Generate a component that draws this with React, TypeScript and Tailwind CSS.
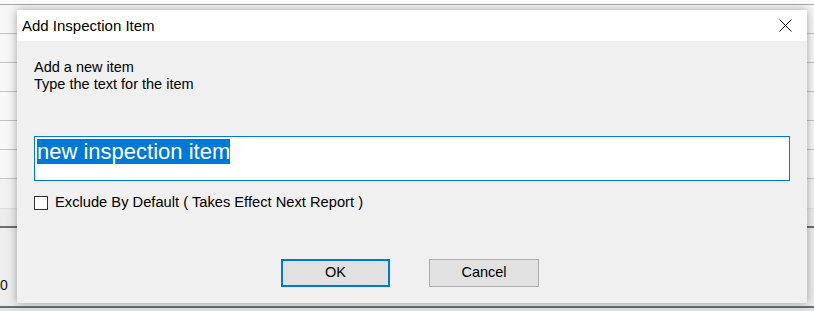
import React from "react";

const rows = [0, 1, 2, 3, 4, 5];

function Backdrop() {
  return (
    <div className="flex flex-col w-full h-full bg-[#f3f3f3]">
      <div className="h-[4px] bg-[#fbfbfb] border-b border-[#a9a9a9] box-content" />
      {rows.map((r) => (
        <div key={r} className="h-[28px] border-b border-[#c4c4c4] box-content bg-[#f7f7f7]" />
      ))}
      <div className="h-[29px] border-b border-[#e0e0e0] box-content bg-[#f2f2f2]" />
      <div className="h-[17px] border-b-2 border-[#6e6e6e] box-content bg-[#ececec]" />
      <div className="flex-1 flex items-center bg-[#ededed]">
        <span className="text-[14px] text-[#111] ml-0 mt-[40px]">0</span>
      </div>
      <div className="h-[3px] border-b-2 border-[#6d6d6d] box-content bg-[#ececec]" />
      <div className="h-[3px] bg-[#dbe4ee]" />
    </div>
  );
}

function CloseIcon() {
  return (
    <svg width="13" height="13" viewBox="0 0 13 13" fill="none" stroke="#111" strokeWidth={1}>
      <path d="M0.5 0.5L12.5 12.5M12.5 0.5L0.5 12.5" />
    </svg>
  );
}

export default function App() {
  return (
    <div
      className="relative w-[814px] h-[311px] overflow-hidden"
      style={{ fontFamily: '"Liberation Sans", Arial, sans-serif' }}
    >
      <Backdrop />

      {/* Dialog window */}
      <div className="absolute left-[17px] top-[10px] w-[790px] h-[293px] flex flex-col bg-[#f0f0f0] shadow-[0_0_9px_rgba(0,0,0,0.35)]">
        {/* Title bar */}
        <div className="h-[31px] flex items-center justify-between bg-white pl-[5px] pr-[15px]">
          <span className="text-[15px] leading-[17px] text-black">Add Inspection Item</span>
          <CloseIcon />
        </div>

        {/* Body */}
        <div className="flex flex-col flex-1 pl-[17px] pt-[18px]">
          <div className="text-[14.5px] leading-[17px] text-black">
            <div>Add a new item</div>
            <div>Type the text for the item</div>
          </div>

          <div className="mt-[43px] w-[756px] h-[45px] border border-[#0078d7] bg-white pl-[2px] pt-[2px]">
            <span className="text-[22px] leading-[25px] bg-[#0078d7] text-white">new inspection item</span>
          </div>

          <div className="mt-[13px] flex items-center gap-[7px]">
            <div className="w-[14px] h-[14px] border border-[#333] bg-white" />
            <span className="text-[14.7px] leading-[17px] text-black">
              Exclude By Default ( Takes Effect Next Report )
            </span>
          </div>

          <div className="mt-[48px] flex pl-[247px] gap-[39px]">
            <button className="w-[109px] h-[28px] border-2 border-[#0078d7] bg-[#e1e1e1] text-[14.5px] text-black">
              OK
            </button>
            <button className="w-[110px] h-[28px] border border-[#adadad] bg-[#e1e1e1] text-[14.5px] text-black">
              Cancel
            </button>
          </div>
        </div>
      </div>
    </div>
  );
}
